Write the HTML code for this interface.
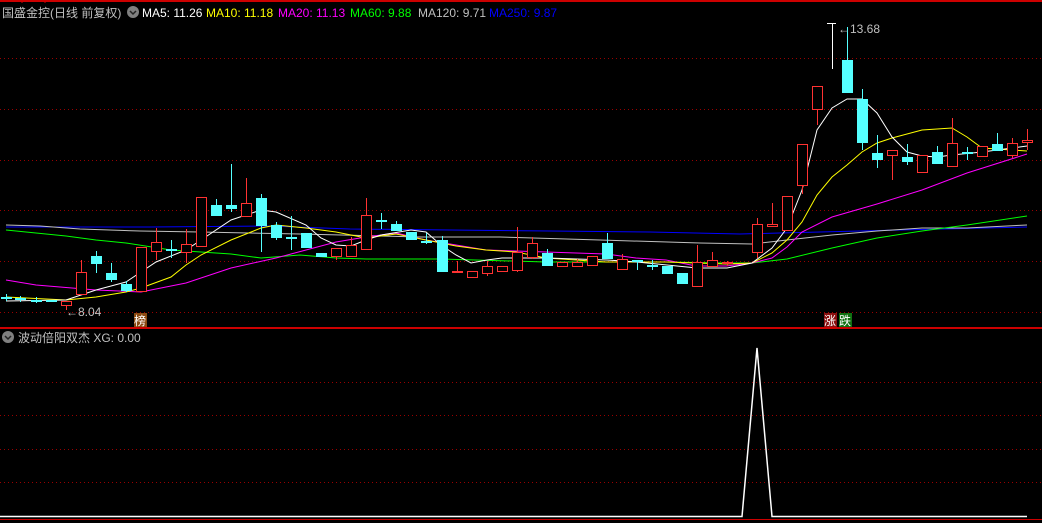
<!DOCTYPE html><html><head><meta charset="utf-8"><style>
html,body{margin:0;padding:0;background:#000;width:1042px;height:523px;overflow:hidden}
svg{display:block}
text{font-family:"Liberation Sans","Noto Sans CJK SC",sans-serif;font-size:12px}
</style></head><body>
<svg width="1042" height="523" xmlns="http://www.w3.org/2000/svg">
<rect width="1042" height="523" fill="#000"/>
<line x1="0" y1="1" x2="1042" y2="1" stroke="#c00" stroke-width="2"/>
<line x1="22" y1="0" x2="22" y2="3" stroke="#c00"/><line x1="45" y1="0" x2="45" y2="3" stroke="#c00"/>
<g stroke="#900" stroke-dasharray="1,3" shape-rendering="crispEdges">
<line x1="0" y1="58.5" x2="1042" y2="58.5"/><line x1="0" y1="109.5" x2="1042" y2="109.5"/><line x1="0" y1="160.5" x2="1042" y2="160.5"/><line x1="0" y1="210.5" x2="1042" y2="210.5"/><line x1="0" y1="261.5" x2="1042" y2="261.5"/><line x1="0" y1="312.5" x2="1042" y2="312.5"/>
<line x1="0" y1="382.5" x2="1042" y2="382.5"/><line x1="0" y1="415.5" x2="1042" y2="415.5"/><line x1="0" y1="449.5" x2="1042" y2="449.5"/><line x1="0" y1="482.5" x2="1042" y2="482.5"/>
</g>
<line x1="0" y1="328" x2="1042" y2="328" stroke="#c00" stroke-width="2"/>
<line x1="0" y1="519.5" x2="1042" y2="519.5" stroke="#c00"/>
<g fill="none" stroke-width="1">
<polyline stroke="#0000ff" points="6,227 150,227 270,226 350,229 450,230 550,231 650,232 740,234 780,233 900,230 1027,227"/>
<polyline stroke="#c0c0c0" points="6,225 40,226 80,229 140,231 200,232 300,234 420,237 500,237 600,240 700,243 752,244 787,240 832,235 877,231 922,228 967,228 1027,225"/>
<polyline stroke="#00ff00" points="6,230 36,233 66,236 96,240 126,243 171,250 231,254 261,258 300,255 336,258 366,259 441,259 546,262 606,262 666,262 726,263 752,263 787,259 832,248 877,238 922,231 967,225 1027,216"/>
<polyline stroke="#ff00ff" points="6,280 36,285 96,290 141,292 186,283 231,268 276,258 306,250 336,242 366,237 396,233 426,240 456,245 486,250 516,251 546,252 576,253 606,254 636,258 666,260 696,266 726,266 752,263 772,258 787,247 802,232 832,217 877,204 922,190 967,173 1027,154"/>
<polyline stroke="#ffff00" points="6,297 66,300 96,297 126,292 141,288 171,277 186,265 201,255 231,240 261,228 276,225 306,228 336,232 366,238 396,234 426,240 456,246 486,250 516,252 546,258 576,260 606,262 636,262 666,262 696,263 726,264 752,263 772,253 787,240 802,222 817,195 832,177 847,165 862,152 877,143 892,138 922,130 952,128 967,137 982,148 1027,151"/>
<polyline stroke="#ffffff" points="6,301 66,300 96,290 126,282 141,272 156,262 186,250 201,240 231,220 261,210 276,212 306,225 321,238 336,245 351,246 366,240 381,235 411,230 426,232 441,245 456,255 471,263 487,260 502,258 517,258 547,258 577,259 607,260 637,262 667,265 697,268 727,268 752,263 772,248 787,228 802,190 817,130 832,108 847,99 862,99 877,113 892,137 907,152 922,156 937,157 952,155 982,152 1027,146"/>
</g>
<g fill="#000" stroke="#ff3232" stroke-width="1" shape-rendering="crispEdges">
<line x1="66.5" y1="304" x2="66.5" y2="310"/><rect x="61.5" y="301.5" width="10" height="4"/>
<line x1="81.5" y1="260" x2="81.5" y2="272"/><rect x="76.5" y="272.5" width="10" height="22"/>
<rect x="136.5" y="247.5" width="10" height="44"/>
<line x1="156.5" y1="228" x2="156.5" y2="260"/><rect x="151.5" y="242.5" width="10" height="9"/>
<line x1="186.5" y1="229" x2="186.5" y2="263"/><rect x="181.5" y="244.5" width="10" height="8"/>
<rect x="196.5" y="197.5" width="10" height="49"/>
<line x1="246.5" y1="178" x2="246.5" y2="203"/><rect x="241.5" y="203.5" width="10" height="13"/>
<line x1="336.5" y1="248" x2="336.5" y2="260"/><rect x="331.5" y="248.5" width="10" height="8"/>
<line x1="351.5" y1="237" x2="351.5" y2="245"/><rect x="346.5" y="245.5" width="10" height="11"/>
<line x1="366.5" y1="198" x2="366.5" y2="215"/><rect x="361.5" y="215.5" width="10" height="34"/>
<line x1="457.5" y1="261" x2="457.5" y2="271"/><rect x="452.5" y="271.5" width="10" height="1"/>
<rect x="467.5" y="271.5" width="10" height="6"/>
<line x1="487.5" y1="261" x2="487.5" y2="276"/><rect x="482.5" y="266.5" width="10" height="7"/>
<rect x="497.5" y="266.5" width="10" height="5"/>
<line x1="517.5" y1="227" x2="517.5" y2="272"/><rect x="512.5" y="252.5" width="10" height="18"/>
<line x1="532.5" y1="237" x2="532.5" y2="259"/><rect x="527.5" y="243.5" width="10" height="14"/>
<rect x="557.5" y="262.5" width="10" height="4"/>
<line x1="577.5" y1="259" x2="577.5" y2="262"/><rect x="572.5" y="262.5" width="10" height="4"/>
<rect x="587.5" y="256.5" width="10" height="9"/>
<line x1="622.5" y1="254" x2="622.5" y2="259"/><rect x="617.5" y="259.5" width="10" height="10"/>
<line x1="697.5" y1="245" x2="697.5" y2="262"/><rect x="692.5" y="262.5" width="10" height="24"/>
<line x1="712.5" y1="252" x2="712.5" y2="260"/><rect x="707.5" y="260.5" width="10" height="6"/>
<line x1="727.5" y1="261" x2="727.5" y2="266"/><rect x="722.5" y="262.5" width="10" height="1"/>
<line x1="757.5" y1="218" x2="757.5" y2="258"/><rect x="752.5" y="224.5" width="10" height="28"/>
<line x1="772.5" y1="203" x2="772.5" y2="224"/><rect x="767.5" y="224.5" width="10" height="2"/>
<rect x="782.5" y="196.5" width="10" height="34"/>
<line x1="802.5" y1="185" x2="802.5" y2="194"/><rect x="797.5" y="144.5" width="10" height="41"/>
<line x1="817.5" y1="109" x2="817.5" y2="125"/><rect x="812.5" y="86.5" width="10" height="23"/>
<line x1="892.5" y1="155" x2="892.5" y2="180"/><rect x="887.5" y="150.5" width="10" height="5"/>
<rect x="917.5" y="155.5" width="10" height="17"/>
<line x1="952.5" y1="118" x2="952.5" y2="167"/><rect x="947.5" y="143.5" width="10" height="23"/>
<rect x="977.5" y="146.5" width="10" height="10"/>
<line x1="1012.5" y1="138" x2="1012.5" y2="158"/><rect x="1007.5" y="143.5" width="10" height="12"/>
<line x1="1027.5" y1="129" x2="1027.5" y2="150"/><rect x="1022.5" y="140.5" width="10" height="2"/>
</g>
<g fill="#55ffff" stroke="#55ffff" stroke-width="1" shape-rendering="crispEdges">
<line x1="6.5" y1="294" x2="6.5" y2="301"/><rect x="1.5" y="297.5" width="10" height="1"/>
<line x1="20.5" y1="296" x2="20.5" y2="302"/><rect x="15.5" y="298.5" width="10" height="1"/>
<line x1="36.5" y1="297" x2="36.5" y2="303"/><rect x="31.5" y="300.5" width="10" height="1"/>
<rect x="46.5" y="300.5" width="10" height="1"/>
<line x1="96.5" y1="251" x2="96.5" y2="273"/><rect x="91.5" y="256.5" width="10" height="7"/>
<line x1="111.5" y1="263" x2="111.5" y2="282"/><rect x="106.5" y="273.5" width="10" height="6"/>
<line x1="126.5" y1="281" x2="126.5" y2="292"/><rect x="121.5" y="284.5" width="10" height="6"/>
<line x1="171.5" y1="240" x2="171.5" y2="258"/><rect x="166.5" y="249.5" width="10" height="1"/>
<line x1="216.5" y1="199" x2="216.5" y2="216"/><rect x="211.5" y="205.5" width="10" height="10"/>
<line x1="231.5" y1="164" x2="231.5" y2="212"/><rect x="226.5" y="205.5" width="10" height="3"/>
<line x1="261.5" y1="194" x2="261.5" y2="252"/><rect x="256.5" y="198.5" width="10" height="27"/>
<line x1="276.5" y1="222" x2="276.5" y2="240"/><rect x="271.5" y="225.5" width="10" height="12"/>
<line x1="291.5" y1="216" x2="291.5" y2="250"/><rect x="286.5" y="237.5" width="10" height="1"/>
<rect x="301.5" y="233.5" width="10" height="14"/>
<rect x="316.5" y="253.5" width="10" height="3"/>
<line x1="381.5" y1="213" x2="381.5" y2="229"/><rect x="376.5" y="220.5" width="10" height="1"/>
<line x1="396.5" y1="221" x2="396.5" y2="231"/><rect x="391.5" y="224.5" width="10" height="6"/>
<rect x="406.5" y="232.5" width="10" height="7"/>
<line x1="426.5" y1="233" x2="426.5" y2="244"/><rect x="421.5" y="241.5" width="10" height="1"/>
<line x1="442.5" y1="236" x2="442.5" y2="272"/><rect x="437.5" y="240.5" width="10" height="31"/>
<line x1="547.5" y1="249" x2="547.5" y2="266"/><rect x="542.5" y="253.5" width="10" height="12"/>
<line x1="607.5" y1="233" x2="607.5" y2="259"/><rect x="602.5" y="243.5" width="10" height="15"/>
<line x1="637.5" y1="260" x2="637.5" y2="270"/><rect x="632.5" y="260.5" width="10" height="1"/>
<line x1="652.5" y1="260" x2="652.5" y2="270"/><rect x="647.5" y="265.5" width="10" height="1"/>
<rect x="662.5" y="266.5" width="10" height="7"/>
<rect x="677.5" y="273.5" width="10" height="10"/>
<line x1="847.5" y1="27" x2="847.5" y2="60"/><rect x="842.5" y="60.5" width="10" height="32"/>
<line x1="862.5" y1="89" x2="862.5" y2="150"/><rect x="857.5" y="99.5" width="10" height="43"/>
<line x1="877.5" y1="135" x2="877.5" y2="168"/><rect x="872.5" y="153.5" width="10" height="6"/>
<line x1="907.5" y1="144" x2="907.5" y2="165"/><rect x="902.5" y="157.5" width="10" height="4"/>
<line x1="937.5" y1="146" x2="937.5" y2="164"/><rect x="932.5" y="152.5" width="10" height="11"/>
<line x1="967.5" y1="147" x2="967.5" y2="160"/><rect x="962.5" y="152.5" width="10" height="1"/>
<line x1="997.5" y1="133" x2="997.5" y2="150"/><rect x="992.5" y="144.5" width="10" height="6"/>
</g>
<g shape-rendering="crispEdges"><line x1="832.5" y1="23" x2="832.5" y2="69" stroke="#fff"/><line x1="827" y1="23.5" x2="836" y2="23.5" stroke="#fff"/></g>
<text x="838" y="33" fill="#c0c0c0">←13.68</text>
<text x="66" y="316" fill="#c0c0c0">←8.04</text>
<rect x="134" y="313" width="13" height="14" fill="#8b4a10"/><text x="134" y="325" fill="#fff">榜</text>
<rect x="824" y="313" width="13" height="14" fill="#8b1010"/><text x="824" y="325" fill="#fff">涨</text>
<rect x="839" y="313" width="13" height="14" fill="#107010"/><text x="839" y="325" fill="#fff">跌</text>
<text x="2" y="17" fill="#c0c0c0">国盛金控(日线 前复权)</text>
<circle cx="133" cy="12" r="6" fill="#808080"/><path d="M130 11 L133 14 L136 11" stroke="#222" fill="none" stroke-width="1.5"/>
<text x="142" y="17" fill="#fff">MA5: 11.26</text>
<text x="206" y="17" fill="#ffff00">MA10: 11.18</text>
<text x="278" y="17" fill="#ff00ff">MA20: 11.13</text>
<text x="350" y="17" fill="#00ff00">MA60: 9.88</text>
<text x="418" y="17" fill="#c0c0c0">MA120: 9.71</text>
<text x="489" y="17" fill="#0000ff">MA250: 9.87</text>
<circle cx="8" cy="337" r="6" fill="#808080"/><path d="M5 336 L8 339 L11 336" stroke="#222" fill="none" stroke-width="1.5"/>
<text x="18" y="342" fill="#c0c0c0">波动倍阳双杰 XG: 0.00</text>
<polyline fill="none" stroke="#fff" stroke-width="1.5" points="0,516.5 742,516.5 757,348 772,516.5 1027,516.5"/>
</svg>
</body></html>
